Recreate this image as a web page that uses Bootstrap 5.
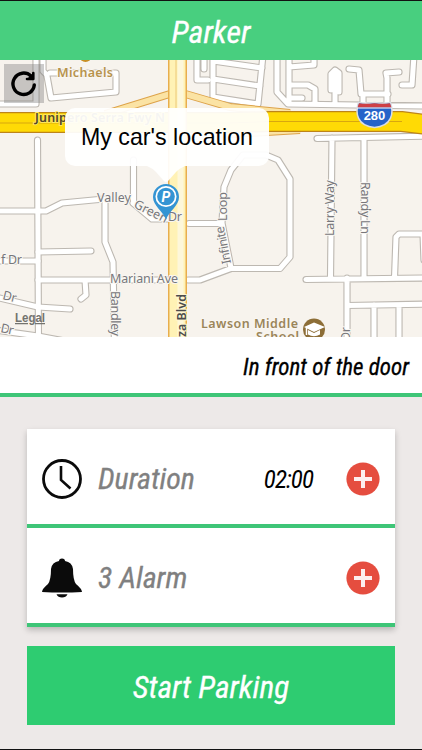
<!DOCTYPE html>
<html lang="en">
<head>
  <meta charset="UTF-8" />
  <title>Parker</title>
  <meta name="viewport" content="width=device-width, initial-scale=1" />
  <link href="https://cdn.jsdelivr.net/npm/bootstrap@5.3.0/dist/css/bootstrap.min.css" rel="stylesheet" />
  <style>
    body { background-color: #ede9e8; font-family: "Roboto Condensed", Roboto, sans-serif; font-stretch: 75%; font-style: italic; }
    .app { height: 750px; border-top: 1px solid #111; border-bottom: 1px solid #111; }
    .app-header { height: 59px; background-color: #48cf7f; color: #fff; font-size: 32px; line-height: 1; padding-top: 2px; -webkit-text-stroke: .3px #fff; }
    .map-area { height: 277px; }
    .map-svg { font-family: "Noto Sans", sans-serif; font-stretch: 100%; font-style: normal; }
    .refresh-btn { left: 4px; top: 4px; width: 40px; height: 39px; background: rgba(120, 120, 120, .38); }
    .callout-box { left: 65px; top: 48px; width: 204px; height: 58px; border-radius: 10px; background: rgba(255, 255, 255, .94);
      color: #000; font: normal 23.2px/58px "Liberation Sans", Arial, sans-serif; white-space: nowrap; }
    .callout-tail { left: 82px; top: 58px; }
    .note-bar { height: 60px; border-bottom: 4px solid #3ec577; font-size: 23px; color: #000; padding: 6px 13px 0 0; -webkit-text-stroke: .3px #000; }
    .panel { margin: 32px 27px 0; box-shadow: 0 3px 6px rgba(0, 0, 0, .22); }
    .panel-row { height: 99px; border-bottom: 4px solid #3ec577; padding: 4px 15px 0; }
    .row-name { color: #808080; font-size: 30px; margin-left: 16px; -webkit-text-stroke: .3px #808080; }
    .row-value { color: #000; font-size: 25px; letter-spacing: -.9px; margin: 2px 33px 0 0; }
    .start-btn { margin: 19px 27px 0; height: 79px; background-color: #2ecc71; color: #fff; font-size: 31.4px; padding-top: 4px; -webkit-text-stroke: .3px #fff; }
  </style>
</head>
<body>
  <div class="app d-flex flex-column overflow-hidden">
    <header class="app-header d-flex align-items-center justify-content-center flex-shrink-0">Parker</header>

    <div class="map-area position-relative flex-shrink-0 overflow-hidden">
      <svg class="map-svg d-block" width="422" height="277" viewBox="0 60 422 277">
        <defs>
          <g id="streets" fill="none" stroke-linecap="round" stroke-linejoin="round">
            <path d="M-5 104H36V55M43 55V71L47 75M50 73H116V92L51 98L47 76" />
            <path d="M37.5 140L38.5 345M133.500 160V203M-5 211H46L62 203L104 199M105 200V242L113 262L114.500 345" />
            <path d="M133 203L152 219H168M38 252L91 251M-5 261H38M38 280H182M85 280L86 295L81 299M-5 297L38 307L70 309M-5 330L38 336L70 342" />
            <path d="M189 223.500H222M188 280H200L231 268.500H280L290 257V179L278 160L266 155L243 155L231 170L224 187L222 223L231 268" />
            <path d="M317 138.500L430 136M332 138L330.500 278M364 138V278M306 279.500L430 278M347 278V345M347 305.500L430 304M374 305V345M399 305V345M394.500 278L396 237L399 234H430M423 234L424 260" />
            <path d="M277 55V92L288 104L430 106M289 55V104M289 67L314 65V55M289 85H308L315 89V104M289 98H302M335 104V71M339 92V73L335 70L331 74V90M349 69L359 70L361 94H388M363 94V104M387 104V78L386 73L399 72M402 85H412L414 55" />
            <path d="M197 55V80H208M213 55V97L258 104L263 55M213 61L262 68M213 79L260 86M204 55V69" />
          </g>
        </defs>
        <rect y="60" width="422" height="277" fill="#f7f3ed" />
        <use href="#streets" stroke="#bdb8b1" stroke-width="7.200" />
        <use href="#streets" stroke="#fff" stroke-width="5" />

        <!-- ramps and freeway -->
        <g fill="none">
          <path d="M105 114L173 93M182 93L230 107L290 113M230 134L300 130" stroke="#dda34a" stroke-width="8" />
          <path d="M105 114L173 93M182 93L230 107L290 113M230 134L300 130" stroke="#fbe3a4" stroke-width="6" />
          <path d="M-5 122.500H230L270 121.500H402L430 125" stroke="#bd8419" stroke-width="21" />
          <path d="M-5 122.500H230L270 121.500H402L430 125" stroke="#ffda05" stroke-width="18.500" />
          <path d="M-5 123H230L270 121.500H402" stroke="#d8a70f" stroke-width="1" />
          <path d="M177.500 55V345" stroke="#e8ae4d" stroke-width="19" />
          <path d="M177.500 55V345" stroke="#fff2b5" stroke-width="16" />
          <path d="M176 55V108" stroke="#ecc878" stroke-width="1" />
          <path d="M180.500 55V345" stroke="#fdf7da" stroke-width="6" />
        </g>

        <g font-size="12.500" fill="#77777b" stroke="#f9f6f1" stroke-width="2" paint-order="stroke">
          <text x="57" y="77" fill="#b7934d" font-weight="600" textLength="56">Michaels</text>
          <text x="35" y="122" fill="#514829" stroke="#ffe65c" font-weight="600" textLength="130">Junipero Serra Fwy N</text>
          <text x="97" y="202" textLength="34">Valley</text>
          <text transform="translate(133 207) rotate(27)" textLength="36">Green</text>
          <text x="168" y="221" textLength="14">Dr</text>
          <text x="110" y="283" textLength="68">Mariani Ave</text>
          <text x="1" y="264" textLength="21">f Dr</text>
          <text transform="translate(2 299) rotate(14)" textLength="14">Dr</text>
          <text transform="translate(0 332) rotate(12)" textLength="13">Dr</text>
          <text transform="translate(110.500 291) rotate(90)" textLength="45">Bandley</text>
          <text transform="translate(185.500 337) rotate(-90)" fill="#4c4c4c" stroke="#fff6cf" font-weight="600" textLength="43" lengthAdjust="spacingAndGlyphs">za Blvd</text>
          <text transform="translate(231 263) rotate(-101)" textLength="38">Infinite</text>
          <text transform="translate(227 221) rotate(-90)" textLength="29">Loop</text>
          <text transform="translate(334 236) rotate(-90)" textLength="56">Larry Way</text>
          <text transform="translate(361 182) rotate(90)" textLength="52">Randy Ln</text>
          <text transform="translate(350 341) rotate(-90)" textLength="14">Dr</text>
          <text x="201" y="328" fill="#9b8559" font-weight="600" textLength="97">Lawson Middle</text>
          <text x="256" y="341" fill="#9b8559" font-weight="600" stroke="none" textLength="43">School</text>
        </g>
        <text x="15" y="322" font-family="Liberation Sans" font-size="12.500" font-weight="bold" fill="#73736f" text-decoration="underline" textLength="30" lengthAdjust="spacingAndGlyphs">Legal</text>

        <circle cx="85.500" cy="56" r="6" fill="#c78f25" />
        <!-- school -->
        <circle cx="314" cy="329.500" r="11" fill="#8d6e37" />
        <path d="M304 327L314 322.500L325 327L314 332ZM308 330V334.500Q314 338 320 334.500V330L314 333Z" fill="#fff" />
        <path d="M306.500 328V335" stroke="#fff" stroke-width="1.500" />

        <!-- interstate shield -->
        <path d="M358.500 102.500Q366 104 374.500 102.500Q383 104 390.500 102.500C394 113 392 126 374.500 127.500C357 126 355 113 358.500 102.500Z" fill="#2663c9" stroke="#d9dde4" stroke-width="1.500" />
        <path d="M359 103.200Q366 104.500 374.500 103.200Q383 104.500 390 103.200L391.500 107.500H357.500Z" fill="#ce4046" />
        <path d="M357.500 108H391.500" stroke="#fff" stroke-width="1" />
        <text x="374.500" y="119.500" text-anchor="middle" font-family="Liberation Sans" font-weight="bold" font-size="13" fill="#fff">280</text>

        <!-- car pin -->
        <path d="M166 219.500C163 211 153 206 153 197A13 13 0 0 1 179 197C179 206 169 211 166 219.500Z" fill="#3494d3" />
        <circle cx="166" cy="196.500" r="9.700" fill="none" stroke="#fff" stroke-width="1.700" />
        <text x="166" y="202" text-anchor="middle" font-family="Roboto, sans-serif" font-style="italic" font-weight="bold" font-size="14" fill="#fff">P</text>
      </svg>

      <div class="refresh-btn position-absolute">
        <svg class="d-block" width="40" height="39" viewBox="0 0 40 39">
          <path d="M30.300 21A10.700 10.700 0 1 1 27 12" fill="none" stroke="#000" stroke-width="3.400" stroke-linecap="round" />
          <path d="M23 15H29.300V9" fill="none" stroke="#000" stroke-width="2.600" stroke-linecap="round" stroke-linejoin="round" />
          <path d="M23 15L29 9V15Z" />
        </svg>
      </div>

      <div class="callout-box position-absolute text-center">My car's location
        <svg class="callout-tail position-absolute" width="38" height="17" viewBox="0 0 38 17"><path d="M0 0H38Q33 2 29 6L22 14Q19 18 16 14L9 6Q5 2 0 0Z" fill="#fff" fill-opacity=".94" /></svg>
      </div>
    </div>

    <div class="note-bar bg-white d-flex align-items-center justify-content-end flex-shrink-0">In front of the door</div>

    <div class="panel bg-white flex-shrink-0">
      <div class="panel-row d-flex align-items-center">
        <svg width="40" height="40" viewBox="0 0 40 40" fill="none" stroke="#0b0b0b">
          <circle cx="20" cy="20" r="18.500" stroke-width="2.800" />
          <path d="M19 7V21L28.500 29.500" stroke-width="2.600" />
        </svg>
        <span class="row-name me-auto">Duration</span>
        <span class="row-value">02:00</span>
        <svg width="34" height="34" viewBox="0 0 34 34"><circle cx="17" cy="17" r="16.600" fill="#e54d3f" /><path d="M17 8V26M8 17H26" stroke="#fdeeee" stroke-width="4" /></svg>
      </div>
      <div class="panel-row d-flex align-items-center">
        <svg width="40" height="40" viewBox="0 0 40 40" fill="#0b0b0b">
          <path d="M17 3Q17 .5 20 .5T23 3Q30 4 31 11Q31 22 34 26Q40 31 40 34Q30 34.500 20 34.500T0 34Q0 31 6 26Q9 22 9 11Q10 4 17 3Z" />
          <path d="M14.500 36.300H25.500Q24 39.500 20 39.500T14.500 36.300Z" />
        </svg>
        <span class="row-name me-auto">3 Alarm</span>
        <svg width="34" height="34" viewBox="0 0 34 34"><circle cx="17" cy="17" r="16.600" fill="#e54d3f" /><path d="M17 8V26M8 17H26" stroke="#fdeeee" stroke-width="4" /></svg>
      </div>
    </div>

    <button type="button" class="start-btn btn rounded-0 border-0 px-0 pb-0 fst-italic flex-shrink-0">Start Parking</button>
  </div>

  <script src="https://cdn.jsdelivr.net/npm/bootstrap@5.3.0/dist/js/bootstrap.bundle.min.js"></script>
</body>
</html>
